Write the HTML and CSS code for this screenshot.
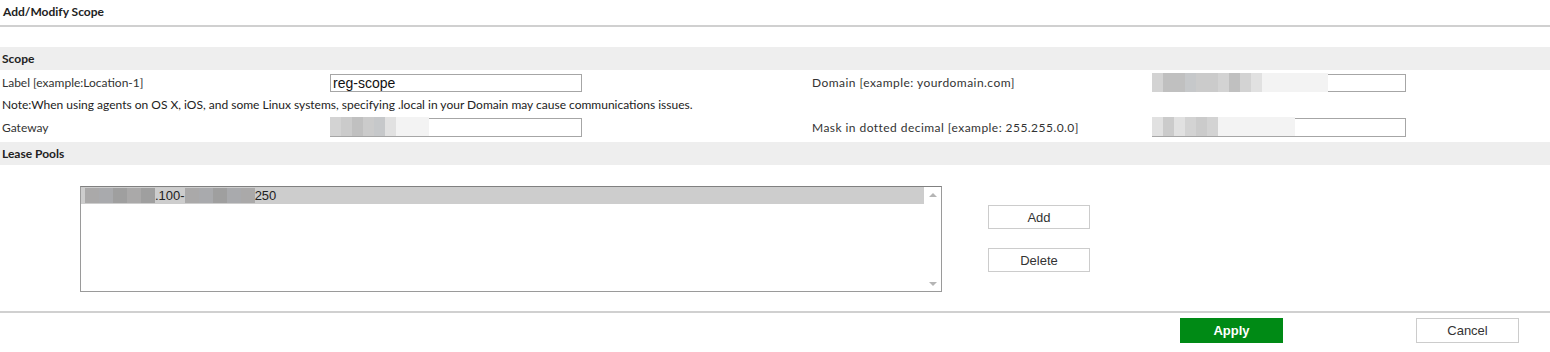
FILE: index.html
```html
<!DOCTYPE html>
<html lang="en">
<head>
    <meta charset="UTF-8">
    <title>Add/Modify Scope</title>
    <link rel="stylesheet" href="styles.css">
</head>
<body>
    <div class="page">
        <div class="page-title">Add/Modify Scope</div>

        <div class="band">Scope</div>
        <div class="form-grid">
            <label class="field-label" for="scope-label">Label [example:Location-1]</label>
            <div class="field"><input type="text" id="scope-label" class="text-input" value="reg-scope"></div>
            <label class="field-label right">Domain [example: yourdomain.com]</label>
            <div class="field">
                <div class="text-input wide masked">
                    <span class="mosaic">
                        <span class="tile t1"></span><span class="tile t3"></span><span class="tile t3"></span><span class="tile t4"></span><span class="tile t2"></span><span class="tile t2"></span><span class="tile t1"></span><span class="tile t3"></span><span class="tile t1"></span><span class="tile t5"></span><span class="tile t6"></span><span class="tile t6"></span><span class="tile t6"></span><span class="tile t6"></span><span class="tile t6"></span><span class="tile t6"></span>
                    </span>
                </div>
            </div>

            <div class="note">Note:When using agents on OS X, iOS, and some Linux systems, specifying .local in your Domain may cause communications issues.</div>

            <label class="field-label">Gateway</label>
            <div class="field gw">
                <div class="text-input masked">
                    <span class="mosaic">
                        <span class="tile t1"></span><span class="tile t2"></span><span class="tile t3"></span><span class="tile t2"></span><span class="tile t4"></span><span class="tile t5"></span><span class="tile t6"></span><span class="tile t6"></span><span class="tile t6"></span>
                    </span>
                </div>
            </div>
            <label class="field-label right">Mask in dotted decimal [example: 255.255.0.0]</label>
            <div class="field gw">
                <div class="text-input wide masked">
                    <span class="mosaic">
                        <span class="tile t5"></span><span class="tile t2"></span><span class="tile t5"></span><span class="tile t1"></span><span class="tile t2"></span><span class="tile t1"></span><span class="tile t6"></span><span class="tile t6"></span><span class="tile t6"></span><span class="tile t6"></span><span class="tile t6"></span><span class="tile t6"></span><span class="tile t6"></span>
                    </span>
                </div>
            </div>
        </div>

        <div class="band">Lease Pools</div>
        <div class="pools">
            <div class="listbox">
                <div class="list-items">
                    <div class="list-item selected">
                        <span class="mosaic dark"><span class="tile d1"></span><span class="tile d2"></span><span class="tile d3"></span><span class="tile d1"></span><span class="tile d3"></span></span>.100-<span class="mosaic dark"><span class="tile d1"></span><span class="tile d2"></span><span class="tile d3"></span><span class="tile d2"></span><span class="tile d1"></span></span>250
                    </div>
                </div>
                <div class="scrollbar">
                    <span class="arrow up"></span>
                    <span class="arrow down"></span>
                </div>
            </div>
            <div class="pool-actions">
                <button class="btn">Add</button>
                <button class="btn">Delete</button>
            </div>
        </div>

        <div class="footer">
            <button class="btn btn-apply">Apply</button>
            <button class="btn btn-cancel">Cancel</button>
        </div>
    </div>
</body>
</html>
```

FILE: styles.css
```css
body {
    margin: 0;
    font-family: Lato, "Open Sans", sans-serif;
    font-size: 12px;
    color: #333;
    background: #fff;
}
.page {
    width: 1550px;
}
.page-title {
    height: 25px;
    line-height: 24px;
    padding-left: 3px;
    font-weight: bold;
    color: #222;
    border-bottom: 2px solid #d0d0d0;
    margin-bottom: 20px;
}
.band {
    height: 23px;
    line-height: 23px;
    padding-left: 2px;
    background: #eee;
    font-weight: bold;
    color: #222;
}
.form-grid {
    display: grid;
    grid-template-columns: 330px 482px 340px 1fr;
    grid-template-rows: 25px 18px 29px;
    align-items: center;
}
.field-label {
    padding-left: 2px;
    color: #333;
}
.field-label.right {
    padding-left: 0;
    letter-spacing: 0.45px;
}
.field {
    display: flex;
    align-items: center;
}
.field.gw {
    margin-top: -1px;
}
.note {
    grid-column: 1 / 5;
    padding-left: 2px;
    color: #222;
}
.text-input {
    box-sizing: border-box;
    width: 252px;
    height: 18px;
    margin: 0;
    padding: 0 2px;
    border: 1px solid #a6a6a6;
    font-family: "Liberation Sans", Arial, sans-serif;
    font-size: 14px;
    color: #111;
    background: #fff;
}
.gw .text-input {
    height: 19px;
}
.text-input.wide {
    width: 254px;
}
.masked {
    padding: 0;
    position: relative;
}
.mosaic {
    display: inline-flex;
    vertical-align: top;
}
.masked .mosaic {
    position: absolute;
    left: -1px;
    top: -2px;
}
.tile {
    display: block;
    width: 11px;
    height: 19px;
}
.t1 { background: #d3d3d3; }
.t2 { background: #cbcbcb; }
.t3 { background: #c0c0c0; }
.t4 { background: #c6c8ca; }
.t5 { background: #e1e1e1; }
.t6 { background: #f3f3f3; }
.pools {
    display: flex;
    align-items: flex-start;
    padding: 21px 0 0 80px;
    height: 126px;
    box-sizing: border-box;
    margin-bottom: 20px;
}
.listbox {
    box-sizing: border-box;
    width: 862px;
    height: 106px;
    border: 1px solid #9a9a9a;
    border-top-color: #808080;
    display: flex;
    font-family: "Liberation Sans", Arial, sans-serif;
    font-size: 13px;
    color: #222;
}
.list-items {
    flex: 1;
}
.list-item {
    height: 17px;
    line-height: 17px;
    padding-left: 4px;
    display: flex;
    align-items: center;
}
.list-item.selected {
    background: #cdcdcd;
}
.dark .tile {
    width: 14px;
    height: 15px;
}
.d1 { background: #aaa9a9; }
.d2 { background: #a9aaad; }
.d3 { background: #9f9f9f; }
.scrollbar {
    width: 17px;
    display: flex;
    flex-direction: column;
    justify-content: space-between;
    align-items: center;
    padding: 6px 0 5px;
}
.arrow {
    width: 0;
    height: 0;
    border-left: 4px solid transparent;
    border-right: 4px solid transparent;
}
.arrow.up {
    border-bottom: 4px solid #b5b5b5;
}
.arrow.down {
    border-top: 4px solid #b5b5b5;
}
.pool-actions {
    display: flex;
    flex-direction: column;
    gap: 19px;
    margin: 19px 0 0 46px;
}
.btn {
    box-sizing: border-box;
    width: 102px;
    height: 24px;
    padding: 0;
    border: 1px solid #ccc;
    background: #fff;
    font-family: "Liberation Sans", Arial, sans-serif;
    font-size: 13px;
    color: #333;
    cursor: pointer;
}
.footer {
    border-top: 2px solid #d0d0d0;
    display: flex;
    justify-content: flex-end;
    padding: 5px 31px 0 0;
    gap: 133px;
}
.btn-apply {
    width: 103px;
    height: 25px;
    background: #008a15;
    border-color: #008a15;
    color: #fff;
    font-weight: bold;
}
.btn-cancel {
    width: 103px;
    height: 25px;
}
```
